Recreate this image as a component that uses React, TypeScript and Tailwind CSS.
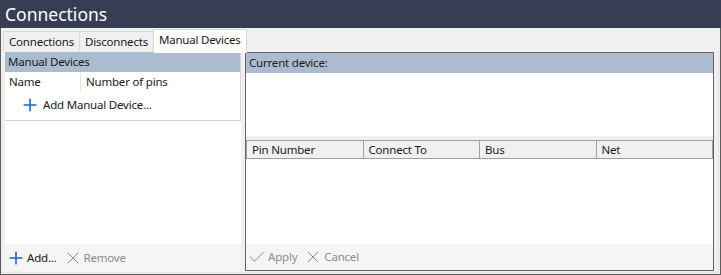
import { Plus, X, Check } from 'lucide-react';

const headerBg = 'bg-[#abbcd1]';

function Tab({ label, active }: { label: string; active?: boolean }) {
  if (active) {
    return (
      <div className="h-[24px] px-[5px] bg-white border-x border-t border-[#d9d9d9] -mb-[2px] relative z-10 leading-[19px]">
        {label}
      </div>
    );
  }
  return (
    <div className="h-[20px] px-[5px] bg-[#f0f0f0] border border-b-0 border-[#d9d9d9] -mr-[1px] leading-[19px]">
      {label}
    </div>
  );
}

export default function App() {
  return (
    <div
      className="w-[721px] h-[275px] flex flex-col text-[11.5px] tracking-[-0.2px] text-[#1a1a1a]"
      style={{ fontFamily: '"Noto Sans", "Open Sans", sans-serif' }}
    >
      <div className="h-[28px] shrink-0 bg-[#373e53] text-white text-[17.5px] tracking-normal leading-[28px] pl-[5px]">
        Connections
      </div>

      <div className="flex-1 flex flex-col bg-[#f0f0f0] border-x border-b border-[#5c5c5c]">
        <div className="h-[23px] shrink-0 flex items-end pl-[2px] pt-[2px]">
          <Tab label="Connections" />
          <Tab label="Disconnects" />
          <Tab label="Manual Devices" active />
        </div>

        <div className="flex-1 flex gap-[4px] px-[4px] pb-[1px] pt-[1px] border-r border-b border-[#e3e3e3] mr-[1px] mb-[1px]">
          {/* left: manual devices list */}
          <div className="w-[236px] flex flex-col bg-white">
            <div className="border-r border-b border-[#d4d4d4]">
              <div className={`h-[20px] ${headerBg} pl-[3px] leading-[20px]`}>Manual Devices</div>
              <div className="h-[19px] flex leading-[19px]">
                <div className="w-[76px] pl-[4px] border-r border-[#e5e5e5]">Name</div>
                <div className="pl-[5px]">Number of pins</div>
              </div>
              <div className="h-[29px] flex items-center pl-[15px] pb-[1px] gap-[3px]">
                <Plus size={20} strokeWidth={1.9} className="text-[#1069d1]" />
                <span>Add Manual Device...</span>
              </div>
            </div>
            <div className="flex-1" />
            <div className="h-[27px] bg-[#f5f5f5] flex items-center pl-[1px] gap-[1px]">
              <Plus size={20} strokeWidth={1.9} className="text-[#1069d1]" />
              <span className="mr-[5px]">Add...</span>
              <X size={20} strokeWidth={1.2} className="text-[#8c8c8c]" />
              <span className="text-[#8c8c8c]">Remove</span>
            </div>
          </div>

          {/* right: current device */}
          <div className="flex-1 flex flex-col border border-[#646464] bg-white">
            <div className={`h-[20px] ${headerBg} pl-[3px] leading-[20px]`}>Current device:</div>
            <div className="h-[63px]" />
            <div className="h-[4px] bg-[#f0f0f0]" />
            <div className="h-[19px] flex bg-[#f0f0f0] border border-[#a0a0a0] leading-[17px]">
              <div className="flex-1 pl-[5px] border-r border-[#a0a0a0]">Pin Number</div>
              <div className="flex-1 pl-[5px] border-r border-[#a0a0a0]">Connect To</div>
              <div className="flex-1 pl-[5px] border-r border-[#a0a0a0]">Bus</div>
              <div className="flex-1 pl-[5px]">Net</div>
            </div>
            <div className="flex-1" />
            <div className="h-[26px] bg-[#f5f5f5] flex items-center pl-[1px] gap-[1px] text-[#8c8c8c]">
              <Check size={20} strokeWidth={1.2} />
              <span className="mr-[5px]">Apply</span>
              <X size={20} strokeWidth={1.2} />
              <span>Cancel</span>
            </div>
          </div>
        </div>
      </div>
    </div>
  );
}
